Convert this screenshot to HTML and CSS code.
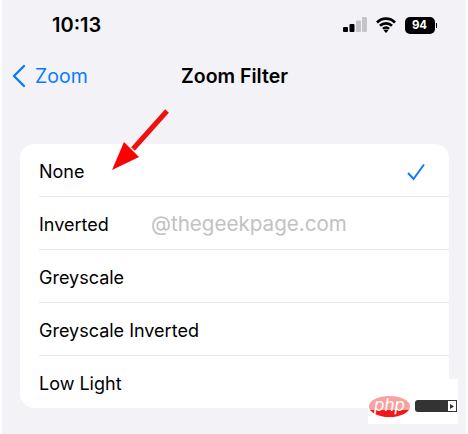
FILE: index.html
```html
<!DOCTYPE html>
<html lang="en">
<head>
    <meta charset="UTF-8">
    <title>Zoom Filter</title>
    <link rel="stylesheet" href="styles.css">
</head>
<body>
    <div class="screen">
        <div class="statusbar">
            <div class="clock">10:13</div>
            <div class="status-icons">
                <svg class="signal" width="24" height="16" viewBox="0 0 24 16">
                    <rect x="0" y="10" width="5" height="5" rx="1" fill="#000"/>
                    <rect x="6.500" y="7" width="5" height="8" rx="1" fill="#000"/>
                    <rect x="13" y="3.500" width="5" height="11.500" rx="1" fill="#c4c4c6"/>
                    <rect x="19" y="0" width="5" height="15" rx="1" fill="#c4c4c6"/>
                </svg>
                <svg class="wifi" width="20" height="16" viewBox="0 0 20 16">
                    <path d="M1 5.500a12.500 12.500 0 0 1 18 0M4 8.800a8.500 8.500 0 0 1 12 0M7 11.900a4.300 4.300 0 0 1 6 0" fill="none" stroke="#000" stroke-width="2.700"/>
                    <path d="M10 16l-2.300-2.500a3 3 0 0 1 4.600 0z" fill="#000"/>
                </svg>
                <div class="battery"><span>94</span></div>
                <div class="battery-cap"></div>
            </div>
        </div>

        <div class="navbar">
            <div class="back">
                <svg width="15" height="24" viewBox="0 0 15 24">
                    <path d="M13 2L3 12l10 10" fill="none" stroke="#0a7aff" stroke-width="2.400" stroke-linecap="round" stroke-linejoin="round"/>
                </svg>
                <span>Zoom</span>
            </div>
            <div class="nav-title">Zoom Filter</div>
        </div>

        <div class="card">
            <div class="row">None
                <svg class="check" width="20" height="18" viewBox="0 0 20 18">
                    <path d="M2 10l5.500 6L18 1.500" fill="none" stroke="#0a7aff" stroke-width="2"/>
                </svg>
            </div>
            <div class="row">Inverted</div>
            <div class="row">Greyscale</div>
            <div class="row">Greyscale Inverted</div>
            <div class="row">Low Light</div>
        </div>
    </div>

    <div class="watermark">@thegeekpage.com</div>

    <svg class="arrow" width="64" height="66" viewBox="0 0 64 66">
        <path d="M56 2L22 40" fill="none" stroke="#f01010" stroke-width="5"/>
        <path d="M1 61L13 33 28 48z" fill="#ff0000"/>
    </svg>

    <div class="php-badge">
        <div class="php-logo"><span>php</span></div>
        <div class="php-text">
            <svg class="php-play" width="9" height="12" viewBox="0 0 9 12">
                <rect width="9" height="12" fill="#fff"/>
                <path d="M0 .5h9M8.500 0v12M0 11.500h9" fill="none" stroke="#333"/>
                <path d="M2 4l4 2.500L2 9z" fill="#333"/>
            </svg>
        </div>
    </div>
</body>
</html>
```

FILE: styles.css
```css
html, body {
    margin: 0;
    padding: 0;
}
body {
    width: 468px;
    height: 434px;
    background: #fff;
    font-family: Inter, "Liberation Sans", sans-serif;
    color: #000;
    position: relative;
    overflow: hidden;
}
.screen {
    margin: 0 2px;
    height: 434px;
    background: #f2f2f7;
    padding: 0 17px 0 18px;
    box-sizing: border-box;
}
.statusbar {
    height: 50px;
    display: flex;
    justify-content: space-between;
    align-items: center;
    padding: 0 12px 0 32px;
}
.clock {
    font-size: 20px;
    font-weight: 600;
}
.status-icons {
    display: flex;
    align-items: center;
}
.signal {
    margin-right: 9px;
}
.wifi {
    margin-right: 9px;
}
.battery {
    width: 30px;
    height: 17px;
    background: #000;
    border-radius: 5px;
    color: #fff;
    font-size: 11.5px;
    font-weight: 700;
    text-align: center;
    line-height: 17px;
}
.battery-cap {
    width: 1.5px;
    height: 5px;
    margin-left: 1px;
    background: #000;
}
.navbar {
    height: 52px;
    display: flex;
    align-items: center;
    justify-content: center;
    position: relative;
}
.nav-title {
    font-size: 19.5px;
    font-weight: 600;
}
.back {
    position: absolute;
    left: -9px;
    top: 14px;
    display: flex;
    align-items: center;
    gap: 9px;
    color: #0a7aff;
    font-size: 19.5px;
}
.card {
    margin-top: 42px;
    background: #fff;
    border-radius: 14px;
    padding-left: 19px;
}
.row {
    height: 53px;
    box-sizing: border-box;
    display: flex;
    align-items: center;
    justify-content: space-between;
    padding: 3px 23px 0 0;
    border-bottom: 1px solid #e5e5ea;
    font-size: 18px;
}
.row:last-child {
    border-bottom: none;
    height: 52px;
}
.watermark {
    position: absolute;
    left: 151px;
    top: 211px;
    font-size: 20.6px;
    color: #c2c2c2;
}
.arrow {
    position: absolute;
    left: 111px;
    top: 109px;
}
.php-badge {
    position: absolute;
    left: 368px;
    top: 379px;
    width: 90px;
    height: 45px;
    background: #fff;
    display: flex;
    align-items: center;
    padding-top: 9px;
    box-sizing: border-box;
}
.php-logo {
    width: 41px;
    height: 21px;
    margin-left: 1px;
    border-radius: 50%;
    background: linear-gradient(to bottom, #f9a0a0 0, #f9a0a0 65%, #f01818 66%);
    color: #fff;
    font-size: 17px;
    font-style: italic;
    text-align: center;
    line-height: 18px;
}
.php-text {
    width: 42px;
    height: 12px;
    margin-left: 5px;
    background: #333;
    border-radius: 3px 0 0 3px;
    display: flex;
    justify-content: flex-end;
}
```
